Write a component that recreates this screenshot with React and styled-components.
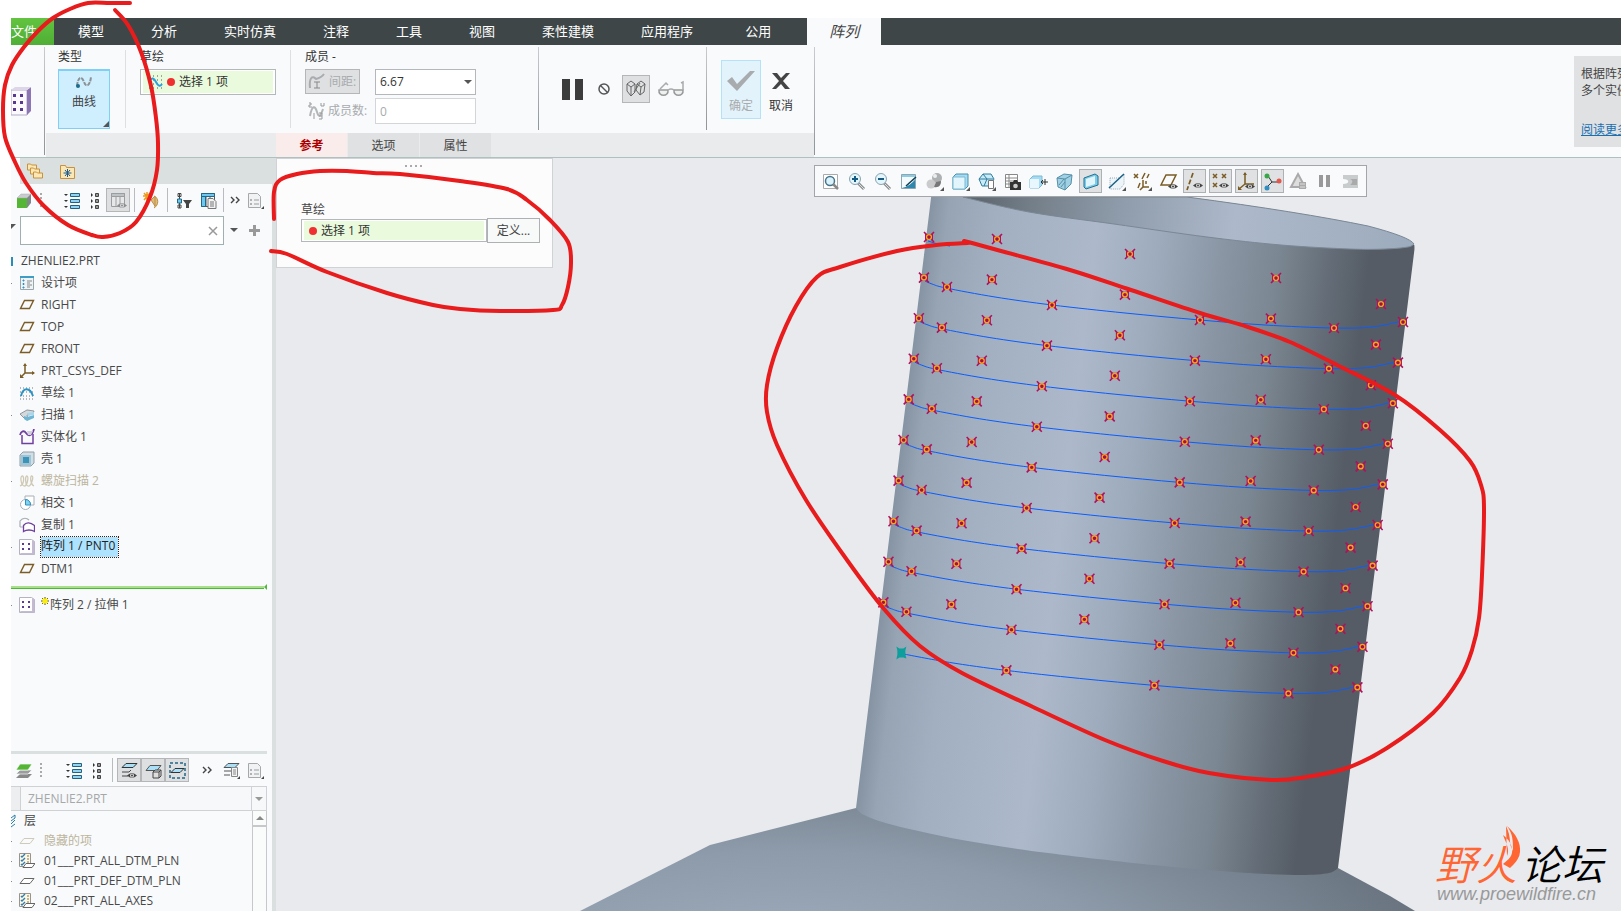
import React from "react";
import styled, { createGlobalStyle, css } from "styled-components";

const GlobalStyle = createGlobalStyle`
  *, *::before, *::after { box-sizing: border-box; }
  body {
    margin: 0;
    background: #fff;
    color: #444;
    font-family: "Open Sans", "Noto Sans CJK SC", sans-serif;
    font-size: 12px;
    line-height: 16px;
  }
  button, input, select { font: inherit; color: inherit; margin: 0; padding: 0; border-radius: 0; }
  ul { list-style: none; margin: 0; padding: 0; }
  svg { flex: none; }
`;

/* ---------- page frame ---------- */
const Page = styled.div`
  position: relative;
  display: flex;
  flex-direction: column;
  height: 100vh;
  padding: 18px 0 0 11px;
  overflow: hidden;
`;
const MenuBar = styled.nav`
  display: flex;
  flex: none;
  gap: 1px;
  height: 27px;
  background: #3e4647;
`;
const MenuTab = styled.button`
  border: 0;
  padding: 0 ${(p) => p.$pad || 23}px 2px;
  background: transparent;
  color: #fff;
  font-size: 13px;
  white-space: nowrap;
  ${(p) =>
    p.$kind === "file" &&
    css`
      width: 43px;
      padding: 0 0 2px;
      text-align: left;
      background: linear-gradient(#62c440, #4fae35);
    `}
  ${(p) =>
    p.$kind === "active" &&
    css`
      width: 74px;
      margin-left: 7px;
      padding: 0 0 2px;
      background: #f8fafc;
      color: #444;
      font-size: 15px;
      font-style: italic;
    `}
`;

/* ---------- ribbon ---------- */
const Ribbon = styled.header`
  display: flex;
  flex: none;
  height: 113px;
  background: #f8fafc;
  border-bottom: 1px solid #b0bfbf;
`;
const Divider = styled.span`
  flex: none;
  width: 1px;
  margin: 2px 0 ${(p) => (p.$short ? 3 : 2)}px;
  background: linear-gradient(#c9cccf, #8f9496);
`;
const Stub = styled.div`
  display: flex;
  flex: none;
  width: 33px;
  padding-top: 41px;
`;
const RibbonMain = styled.div`
  display: flex;
  flex-direction: column;
  flex: none;
  padding-left: 1px;
`;
const Groups = styled.div`
  display: flex;
  height: 88px;
`;
const Group = styled.section`
  padding: 4px ${(p) => p.$right || 14}px 4px ${(p) => p.$left || 14}px;
`;
const LightRule = styled.span`
  width: 1px;
  margin: 5px 0;
  background: #dde0e2;
`;
const GroupTitle = styled.label`
  display: block;
  height: 20px;
  line-height: 15px;
  color: #333;
`;
const CurveButton = styled.button`
  display: flex;
  flex-direction: column;
  align-items: center;
  gap: 5px;
  position: relative;
  width: 52px;
  height: 60px;
  padding-top: 4px;
  border: 1px solid #7fd0f7;
  border-top-width: 2px;
  background: #cfefff;
  &::after {
    content: "";
    position: absolute;
    right: 0;
    bottom: 1px;
    border-left: 6px solid transparent;
    border-bottom: 6px solid #555;
  }
`;
const Collector = styled.div`
  display: flex;
  align-items: center;
  width: ${(p) => p.$width}px;
  height: ${(p) => p.$height}px;
  padding: 1px 2px;
  border: 1px solid #b4b8ba;
  background: #fff;
`;
const CollectorFill = styled.div`
  display: flex;
  align-items: center;
  gap: 4px;
  flex: 1;
  min-width: 0;
  height: 100%;
  padding-left: 5px;
  background: #e9fbdc;
`;
const CollectorInput = styled.input`
  flex: 1;
  min-width: 0;
  border: 0;
  background: transparent;
  color: #333;
`;
const RedDot = styled.span`
  flex: none;
  width: 8px;
  height: 8px;
  border-radius: 50%;
  background: #f03030;
`;
const FieldRow = styled.div`
  display: flex;
  gap: 15px;
  margin-bottom: 3px;
`;
const SpacingToggle = styled.button`
  display: flex;
  align-items: center;
  gap: 3px;
  width: 55px;
  height: 25px;
  padding-left: 2px;
  border: 1px solid #b4b6b8;
  background: #dfe0e2;
  color: #a8abad;
  white-space: nowrap;
`;
const CountLabel = styled.label`
  display: flex;
  align-items: center;
  gap: 3px;
  width: 55px;
  padding-left: 3px;
  color: #a8abad;
  white-space: nowrap;
`;
const boxField = css`
  width: 101px;
  height: 26px;
  padding-left: 4px;
  border: 1px solid #b4b8ba;
  background: #fff;
  color: #333;
`;
const SelectShell = styled.div`
  position: relative;
  display: flex;
  &::after {
    content: "";
    position: absolute;
    right: 4px;
    top: 11px;
    border: 4px solid transparent;
    border-top-color: #555;
    pointer-events: none;
  }
`;
const ValueSelect = styled.select`
  ${boxField}
  appearance: none;
`;
const CountInput = styled.input`
  ${boxField}
  border-color: #d3d6d8;
  &:disabled { color: #a8abad; background: #fff; }
`;
const Controls = styled.section`
  display: flex;
  align-items: center;
  gap: ${(p) => p.$gap}px;
  padding: 0 ${(p) => p.$right}px 0 ${(p) => p.$left}px;
`;
const PlainButton = styled.button`
  display: flex;
  align-items: center;
  justify-content: center;
  width: ${(p) => p.$size || 28}px;
  height: 28px;
  border: 1px solid ${(p) => (p.$on ? "#b4b6b8" : "transparent")};
  background: ${(p) => (p.$on ? "#dfe0e2" : "transparent")};
`;
const VerdictButton = styled.button`
  display: flex;
  flex-direction: column;
  align-items: center;
  gap: 3px;
  width: ${(p) => (p.$ok ? 40 : 30)}px;
  height: 59px;
  padding-top: 6px;
  border: 1px solid ${(p) => (p.$ok ? "#b5e2f7" : "transparent")};
  background: ${(p) => (p.$ok ? "#e3f3fb" : "transparent")};
  color: ${(p) => (p.$ok ? "#a8abad" : "#333")};
  white-space: nowrap;
`;
const SubBar = styled.div`
  display: flex;
  gap: 1px;
  flex: 1;
  padding-left: 230px;
  background: #e9ebec;
`;
const SubTab = styled.button`
  width: 71px;
  padding-top: 2px;
  border: 0;
  background: ${(p) => (p.$active ? "#fbecec" : "#dfe1e2")};
  color: ${(p) => (p.$active ? "#a00" : "#444")};
  font-weight: ${(p) => (p.$active ? 600 : 400)};
`;
const HelpCard = styled.aside`
  width: 47px;
  height: 91px;
  margin: 11px 0 0 auto;
  padding: 9px 0 0 7px;
  overflow: hidden;
  background: #dfe1e3;
  line-height: 17px;
  white-space: nowrap;
`;
const HelpLink = styled.a`
  display: block;
  margin-top: 22px;
  color: #1a6fb0;
`;

/* ---------- body ---------- */
const Body = styled.div`
  display: flex;
  flex: 1;
  min-height: 0;
`;
const Side = styled.aside`
  display: flex;
  flex-direction: column;
  flex: none;
  width: 265px;
  border-right: 4px solid #dadfdf;
  background: #f8fafc;
`;
const SideTabs = styled.div`
  display: flex;
  align-items: center;
  gap: 16px;
  height: 26px;
  margin: 0 -4px 0 9px;
  padding-left: 7px;
  background: #dadfdf;
`;
const BareButton = styled.button`
  display: flex;
  align-items: center;
  justify-content: center;
  border: 0;
  background: transparent;
`;
const SideTools = styled.div`
  display: flex;
  align-items: center;
  height: ${(p) => p.$height}px;
`;
const Tool = styled.button`
  display: flex;
  align-items: center;
  justify-content: center;
  flex: none;
  width: ${(p) => p.$width || 24}px;
  height: 24px;
  border: 1px solid ${(p) => (p.$on ? "#b4b6b8" : "transparent")};
  background: ${(p) => (p.$on ? "#dddfe1" : "transparent")};
`;
const ToolRule = styled.span`
  width: 1px;
  height: 24px;
  margin: 0 ${(p) => p.$gap || 4}px;
  background: #b8bcbe;
`;
const Spacer = styled.span`
  flex: 1;
`;
const Grip = styled.span`
  width: 2px;
  height: 14px;
  margin: 0 ${(p) => p.$after}px 0 5px;
  background: repeating-linear-gradient(#aaa 0 2px, transparent 2px 4px);
`;
const SearchRow = styled.div`
  display: flex;
  align-items: flex-start;
  height: 34px;
`;
const SearchBox = styled.div`
  display: flex;
  width: 204px;
  height: 29px;
  border: 1px solid #a0b0b2;
  background: #fff;
`;
const SearchInput = styled.input`
  flex: 1;
  min-width: 0;
  padding-left: 6px;
  border: 0;
  background: transparent;
`;
const FilterMark = styled.svg`
  width: 9px;
  height: 29px;
`;
const SearchTool = styled(BareButton)`
  width: 20px;
  height: 28px;
`;
const Tree = styled.ul`
  flex: 1;
  overflow: hidden;
`;
const TreeRow = styled.li`
  display: flex;
  align-items: center;
  gap: ${(p) => (p.$layer ? 9 : 6)}px;
  height: ${(p) => (p.$layer ? 20 : 22)}px;
  color: ${(p) => (p.$muted ? "#bdb59c" : "#484848")};
  white-space: nowrap;
`;
const Tick = styled.span`
  width: 8px;
  margin-right: -${(p) => (p.$layer ? 9 : 6)}px;
  &::before {
    content: "";
    display: block;
    width: 1px;
    height: 1px;
    background: ${(p) => (p.$show ? "#888" : "transparent")};
  }
`;
const RootRow = styled.li`
  display: flex;
  align-items: center;
  gap: 8px;
  height: ${(p) => (p.$layer ? 20 : 22)}px;
  white-space: nowrap;
`;
const RootBar = styled.span`
  width: 2px;
  height: 9px;
  background: #2b8cb5;
`;
const NodeName = styled.span`
  ${(p) =>
    p.$selected &&
    css`
      height: 20px;
      padding: 1px 3px 0 0;
      outline: 1px dotted #402010;
      background: #aee3ff;
      color: #222;
    `}
`;
const InsertMarker = styled.li`
  display: flex;
  align-items: center;
  height: 14px;
  margin-right: 5px;
  &::before {
    content: "";
    flex: 1;
    height: 3px;
    border-top: 2px solid #a8e08a;
    border-bottom: 1px solid #4fb83a;
  }
  &::after {
    content: "";
    border: 3px solid transparent;
    border-left: 0;
    border-right-color: #4fb83a;
  }
`;
const LayerPanel = styled.div`
  flex: none;
  height: 160px;
  margin-right: 5px;
  overflow: hidden;
  border-top: 3px solid #dadfdf;
`;
const ModelSelectShell = styled.div`
  display: flex;
  position: relative;
  padding-left: 9px;
  height: 25px;
  border: solid #cfd2d4;
  border-width: 1px 0;
  background: #eceeef;
  &::after {
    content: "";
    position: absolute;
    right: 4px;
    top: 10px;
    border: 4px solid transparent;
    border-top-color: #999;
    pointer-events: none;
  }
`;
const ModelSelect = styled.select`
  flex: 1;
  padding-left: 7px;
  border: solid #cfd2d4;
  border-width: 0 1px;
  appearance: none;
  &:disabled {
    opacity: 1;
    color: #a5a8aa;
    background: linear-gradient(#cfd2d4, #cfd2d4) right 14px top / 1px 100% no-repeat #f7f8f9;
  }
`;
const LayerBody = styled.div`
  display: flex;
`;
const LayerList = styled.ul`
  flex: 1;
`;
const Scrollbar = styled.div`
  width: 15px;
  height: 100px;
  border: solid #c6c9cb;
  border-width: 0 1px;
  background: #fafbfb;
`;
const ScrollUp = styled(BareButton)`
  width: 13px;
  height: 16px;
  border-bottom: 2px solid #c6c9cb;
`;

/* ---------- viewport ---------- */
const Viewport = styled.main`
  position: relative;
  flex: 1;
  min-width: 0;
  background: #e8eaee;
  overflow: hidden;
`;
const Scene = styled.svg`
  display: block;
  width: 100%;
  height: 100%;
`;
const RefPanel = styled.section`
  position: absolute;
  top: 0;
  left: 0;
  width: 277px;
  height: 110px;
  padding: 6px 12px 0 24px;
  border: 1px solid #d0d3d5;
  background: #fcfcfc;
`;
const PanelGrip = styled.div`
  width: 18px;
  height: 2px;
  margin: 0 auto 32px 104px;
  background: repeating-linear-gradient(90deg, #aaa 0 2px, transparent 2px 5px);
`;
const PanelLabel = styled.label`
  display: block;
  height: 19px;
  padding-top: 3px;
`;
const PanelRow = styled.div`
  display: flex;
  align-items: center;
`;
const DefineButton = styled.button`
  width: 53px;
  height: 25px;
  border: 1px solid #aeb1b3;
  background: #f8f9f9;
`;
const ViewBar = styled.div`
  position: absolute;
  top: 7px;
  left: 40%;
  display: flex;
  gap: 3px;
  padding: 3px 4px 3px 4px;
  border: 1px solid #a2a6a8;
  background: #f8fafc;
`;
const ViewTool = styled.button`
  display: flex;
  align-items: center;
  justify-content: center;
  width: 23px;
  height: 24px;
  border: 1px solid ${(p) => (p.$on ? "#aeb1b3" : "transparent")};
  background: ${(p) => (p.$on ? "#dfe1e3" : "transparent")};
`;
const Watermark = styled.div`
  position: absolute;
  right: 18px;
  bottom: 7px;
  width: 168px;
`;
const Brand = styled.div`
  display: flex;
  justify-content: space-between;
  height: 45px;
  font: italic 350 41px/44px "Noto Sans CJK SC", sans-serif;
  color: #000;
`;
const BrandHot = styled.span`
  color: #ff6633;
`;
const Flame = styled.svg`
  position: absolute;
  left: 64px;
  top: -14px;
  width: 24px;
  height: 44px;
`;
const Site = styled.div`
  padding-left: 2px;
  font: italic 18px/19px "Liberation Sans", sans-serif;
  color: #999;
`;
const Annotations = styled.svg`
  position: absolute;
  inset: 0;
  width: 100%;
  height: 100%;
  pointer-events: none;
`;

/* ---------- icons ---------- */
const Svg = ({ w = 16, h = 16, box, children }) => (
  <svg width={w} height={h} viewBox={box || `0 0 ${w} ${h}`} fill="none" aria-hidden="true">
    {children}
  </svg>
);
const Corner = () => <path d="M20 16v4h-4z" fill="#555" />;
const Eye = ({ x = 9, y = 11, c = "#444" }) => (
  <g transform={`translate(${x} ${y})`}>
    <path d="M0 3.500Q5-1.500 10 3.500Q5 8 0 3.500z" fill={c} />
    <circle cx="5" cy="3.500" r="2" fill="#ddd" />
    <circle cx="5" cy="3.500" r="1" fill={c} />
  </g>
);

const plane = <path d="M5.500 3.500h9l-4 8h-9z" stroke="#7a5c24" strokeWidth="1.400" />;
const patternIcon = (
  <>
    <path d="M.5.5h12l3 2v13H.5z" fill="#fff" stroke="#b5b3c0" />
    <path d="M13 1l2.500 1.500v13H2L1 14h12z" fill="#c4bbd3" />
    <path d="M3 4h2v2H3zM9 4h2v2H9zM3 9h2v2H3zM9 9h2v2H9z" fill="#5b3b92" />
  </>
);
const treeIcons = {
  design: (
    <>
      <path d="M1.500 1.500h13v13h-13z" fill="#eef3f5" stroke="#9ba6ac" />
      <path d="M1 1h14v2H1z" fill="#3f9cc4" />
      <path d="M4 5h1v1H4zM4 8.500h1v1H4zM4 12h1v1H4z" stroke="#2b8cc4" />
      <path d="M8 6h5M8 8h3M8 10h5M8 12h3" stroke="#888" />
    </>
  ),
  plane,
  csys: (
    <>
      <path d="M6 2v8h9M6 10l-4 4" stroke="#7a5c24" strokeWidth="1.500" />
      <path d="M4 3l2-3 2 3zM13 8l3 2-3 2zM1 11v4h4z" fill="#7a5c24" />
    </>
  ),
  sketch: (
    <>
      <path d="M1 3h14M1 7h14M1 11h14M1 14h14" stroke="#777" strokeDasharray="1 2" />
      <path d="M2 11C4 2 11 2 14 11" stroke="#2a92c4" strokeWidth="2" />
    </>
  ),
  sweep: (
    <>
      <path d="M1 7l7-4 7 1-1 3-6 1 1 5-4-2z" fill="#d5d9dc" stroke="#8e979d" />
      <path d="M5 9l3 1 7-2v3l-7 3-3-2z" fill="#6fb5d3" />
      <path d="M8 6l7-1v3l-6 1z" fill="#a9d6ea" />
    </>
  ),
  solidify: (
    <>
      <path d="M3 6v8.500h11V5" stroke="#7040a0" strokeWidth="1.500" />
      <path d="M1 6C2 2 5 1 7 4s6 4 8-4" stroke="#7040a0" strokeWidth="1.800" />
      <path d="M8 2h6l-2 4H9z" fill="#d3d0dc" />
    </>
  ),
  shell: (
    <>
      <path d="M1 4l3-3h11v11l-3 3H1z" fill="#d3dde3" stroke="#8fa0ab" />
      <path d="M3 5h8v8H3z" fill="#3b93b8" stroke="#9cc6d8" strokeWidth="2" />
    </>
  ),
  helix: <path d="M1 13C6 11 5 2 3 3s-1 9 2 10 5-9 3-10-2 9 1 10 6-9 4-10-2 8 2 10" stroke="#cfc8b4" strokeWidth="1.300" />,
  intersect: (
    <>
      <path d="M6 1h9v9H6z" fill="#fff" stroke="#aab0b4" />
      <circle cx="6.500" cy="9.500" r="5" stroke="#aab0b4" fill="#fff" />
      <path d="M6.500 4.500a5 5 0 0 1 5 5.500h-5z" fill="#7fd2f2" stroke="#2a92c4" />
    </>
  ),
  copy: (
    <>
      <path d="M1 10V4c3-4 7-3 9-1M1 10h3" stroke="#a9adb1" strokeWidth="1.200" />
      <path d="M4.500 14.500v-6c3-4 7-3 11 0v6c-3-2-8-2-11 0z" stroke="#7040a0" strokeWidth="1.300" fill="#fff" />
    </>
  ),
  pattern: patternIcon,
  layerOff: <path d="M5 5.500h10l-4 5H1z" stroke="#d0caba" />,
  layer: <path d="M5 5.500h10l-4 5H1z" stroke="#666" fill="#fff" />,
  layerRule: (
    <>
      <path d="M.5.5h11v13H.5z" fill="#fff8dc" stroke="#9b948a" />
      <path d="M2 3l1 1 3-3M2 7l1 1 3-3M2 11l1 1 3-3" stroke="#2a7fc4" strokeWidth="1.400" />
      <path d="M8 3h2M8 6h2M8 9h2" stroke="#777" />
      <path d="M7 10.500h9l-3 4H4z" stroke="#666" fill="#fff" />
    </>
  ),
};

const sideIcons = {
  cube: (
    <>
      <path d="M2 6h10v10H2z" fill="#55b535" />
      <path d="M2 6l4-4h10l-4 4z" fill="#c9ccce" stroke="#aaa" strokeWidth=".5" />
      <path d="M12 6l4-4v9l-4 5z" fill="#80868a" />
    </>
  ),
  layers: (
    <>
      <path d="M1 16l4-4h12l-4 4z" fill="#888" />
      <path d="M1 12l4-4h12l-4 4z" fill="#9c9c9c" stroke="#f8fafc" strokeWidth=".7" />
      <path d="M1 8l4-6h12l-4 6z" fill="#55b535" stroke="#f8fafc" strokeWidth=".7" />
    </>
  ),
  expand: (
    <>
      <path d="M6.500 1.500h9v3h-9zM6.500 7.500h9v3h-9zM6.500 13.500h9v3h-9z" fill="#8ed4f3" stroke="#25607c" />
      <path d="M0 2h4L2 4zM0 8h4l-2 2zM0 14h4l-2 2z" fill="#333" />
    </>
  ),
  collapse: (
    <>
      <path d="M5.500 1.500h3v3h-3zM5.500 7.500h3v3h-3zM5.500 13.500h3v3h-3z" fill="#999" stroke="#444" />
      <path d="M1 1l2 2-2 2zM1 7l2 2-2 2zM1 13l2 2-2 2z" fill="#333" />
    </>
  ),
  columns: (
    <>
      <path d="M1.500 1.500h13v13h-13zM6 2v13M10 2v13" stroke="#9a9da0" fill="#e6e7e8" />
      <path d="M1.500 1.500h13v3h-13z" fill="#bfc2c4" stroke="#9a9da0" />
      <Eye x={7} y={10} c="#8b8e90" />
    </>
  ),
  find: (
    <>
      <path d="M8 8l4-4v10z M11 4c5 2 5 9 0 12" fill="#e0bd78" stroke="#b98f48" />
      <path d="M4 0v9M0 4h9M1 1l6 7M7 1L1 8" stroke="#eb9a1c" strokeWidth="1.500" />
    </>
  ),
  filter: (
    <>
      <path d="M3.500 1v15M2 1.500h3v3H2zM2 13h3v3H2z" stroke="#444" fill="#fff" />
      <path d="M1.500 7h4v4h-4z" fill="#6cc8ee" stroke="#246685" />
      <path d="M7 8h9l-3 4v4h-3v-4z" fill="#444" />
    </>
  ),
  treeCols: (
    <>
      <path d="M1.500 1.500h13v13h-13zM6 1v13M10 1v13" stroke="#555" fill="#fff" />
      <path d="M1.500 1.500h13v3h-13zM1.500 4.500h4v10h-4z" fill="#6cc8ee" stroke="#246685" />
      <path d="M8 6.500h5l3 3v7H8z" fill="#f3f3f3" stroke="#777" />
      <path d="M10 10h4M10 12h4M10 14h4" stroke="#777" />
    </>
  ),
  sheet: (
    <>
      <path d="M1.500 1.500h9l3 3v11h-12z" fill="#f0f2f3" stroke="#a5a9ab" />
      <path d="M3.500 7.500h1v1h-1zM3.500 11.500h1v1h-1zM7 8h5M7 12h5" stroke="#9a9da0" />
      <path d="M17 14v3h-3z" fill="#444" />
    </>
  ),
  more: <path d="M1 5l3 3-3 3M6 5l3 3-3 3" stroke="#444" strokeWidth="1.400" />,
  layerEye: (
    <>
      <path d="M5 1.500h11l-4 4H1z" fill="#a9e0f7" stroke="#333" />
      <path d="M1 10h7l2-2M1 14h6" stroke="#444" />
      <Eye x={6} y={10} />
    </>
  ),
  layerBox: (
    <>
      <path d="M5 3.500h11l-4 5H1z" fill="#a9e0f7" stroke="#555" />
      <path d="M8 10l2-2h6v6l-2 2H8zM8 10h6v6M14 10l2-2" fill="#ddd" stroke="#444" />
    </>
  ),
  layerDash: (
    <>
      <path d="M1 1h15v15H1z" stroke="#246685" strokeWidth="1.500" strokeDasharray="3 2" />
      <path d="M6 6.500h9l-4 4H2z" fill="#a9e0f7" stroke="#333" />
    </>
  ),
  layerSheet: (
    <>
      <path d="M5 1.500h11l-4 4H1z" fill="#a9e0f7" stroke="#555" />
      <path d="M1 9h7M1 13h6" stroke="#555" />
      <path d="M8.500 5.500h6v9h-6z" fill="#f3f3f3" stroke="#888" />
      <path d="M10 8h3M10 10h3M10 12h3" stroke="#888" />
      <path d="M17 14v3h-3z" fill="#444" />
    </>
  ),
  folders: (
    <>
      {[0, 4, 8].map((d) => (
        <path key={d} d={`M${d * 0.75 + 0.5} ${1 + d}h3l1 1h5v5h-9z`} fill="#fbe7b5" stroke="#c8913a" />
      ))}
    </>
  ),
  favourite: (
    <>
      <path d="M.5 2.500h5l1 2h8v11H.5z" fill="#fbe7b5" stroke="#c8913a" />
      <path d="M7.500 6v8M3.500 10h8M5 7l5 6M10 7l-5 6" stroke="#1c5b8c" />
    </>
  ),
};

const blueBox = (
  <>
    <path d="M3 6l3-3h12v12l-3 3H3z" fill="#a6dcf3" stroke="#478fae" />
    <path d="M3 6h12v12H3z" fill="#e3f5fc" stroke="#7cb9d2" />
  </>
);
const lens = (mark) => (
  <>
    <path d="M12 12l6 6" stroke="#8b8f92" strokeWidth="3" />
    <path d="M13 13l5 5" stroke="#ddd" />
    <circle cx="9" cy="8" r="5.500" fill="#e3f6fd" stroke="#8ba4b0" />
    <path d={mark} stroke="#175a82" strokeWidth="2" />
  </>
);
const viewTools = [
  ["重新调整", false, <><path d="M3.500 3.500h14v14h-14z" fill="#fff" stroke="#aaa" /><circle cx="10" cy="10" r="4.500" fill="#d9f2fc" stroke="#47748a" strokeWidth="1.500" /><path d="M13 13l5 5" stroke="#888" strokeWidth="2.500" /></>],
  ["放大", false, lens("M9 5v6M6 8h6")],
  ["缩小", false, lens("M6 8h6")],
  ["重画", false, <><path d="M3.500 3.500h14v14h-14z" fill="#8ccde3" stroke="#8fa6b0" /><path d="M4 6h13C16 12 10 16 4 17z" fill="#f5fafc" /><path d="M4 17C10 16 14 12 17 9v8z" fill="#2e87ad" /><path d="M18 6L8 15" stroke="#123c50" strokeWidth="1.500" /></>],
  ["渲染", false, <><circle cx="13" cy="7" r="5" fill="#aeb1b3" /><circle cx="7" cy="13" r="4.500" fill="#c9cbcd" /><path d="M10 16c5 1 7-2 7-6l-5 1z" fill="#777" /><circle cx="11" cy="5" r="2" fill="#eee" /><Corner /></>],
  ["显示样式", false, <>{blueBox}<Corner /></>],
  ["已保存方向", false, <><path d="M3 8l4-5h8l3 5-4 7H6z" fill="#c9ebf8" stroke="#2e7c9c" /><path d="M3 8h14M7 3l4 5-3 7" stroke="#2e7c9c" /><path d="M12.500 9.500h5v8h-5z" fill="#fff" stroke="#777" /><Corner /></>],
  ["视图管理器", false, <><path d="M3.500 3.500h12v13h-12zM3 7h12M3 10h12M3 13h12M7 3v13" stroke="#888" fill="#fff" /><path d="M8 11h3l1-2h3l1 2h3v8H8z" fill="#333" /><circle cx="13.500" cy="15" r="2.300" fill="#ccc" /></>],
  ["透视图", false, <><path d="M2 8l3-3h9v9l-3 3H2z" fill="#a6dcf3" stroke="#7cb9d2" /><path d="M2 8h9v9H2z" fill="#e8f7fd" /><path d="M13 11h7M17 8v6M13 11l2-2M13 11l2 2" stroke="#333" /></>],
  ["截面", false, <><path d="M3 7l7-4 8 1-1 9-6 6-7-3z" fill="#9fd0e4" stroke="#5790a8" /><path d="M3 7l8 1 7-4M11 8v11M5 14l5-6M7 16l4-5" stroke="#5790a8" /></>],
  ["平面显示", true, <><path d="M4 7l11-4 3 2v9l-12 4-2-2z" fill="#7ccbe9" stroke="#25718f" /><path d="M6 8l9-3v8l-9 3z" fill="#e1f5fd" /></>],
  ["剖切", false, <><path d="M4 7h9l5-4v10l-4 5H4z" stroke="#9ab" strokeDasharray="1 1" fill="#eef5f8" /><path d="M3 17L18 3" stroke="#186287" strokeWidth="1.500" /><Corner /></>],
  ["基准显示过滤器", false, <><path d="M2 3l4 4M6 3L2 7M8 12L6 17M13 2l-3 6M17 3l-2 4" stroke="#7a5c24" strokeWidth="1.500" /><path d="M11 9v7h6M11 16l-3 3M14 10v3" stroke="#7a5c24" strokeWidth="1.500" /><Corner /></>],
  ["平面", false, <><path d="M8 4h10l-5 10H3z" stroke="#7a5c24" strokeWidth="1.500" /><Eye x={10} y={12} /></>],
  ["轴显示", true, <><path d="M9 2L3 19" stroke="#7a5c24" strokeWidth="1.700" strokeDasharray="5 2" /><Eye x={9} y={11} /></>],
  ["点显示", true, <><path d="M3 3l4 4M7 3L3 7M12 3l4 4M16 3l-4 4M3 12l4 4M7 12l-4 4" stroke="#7a5c24" strokeWidth="1.500" /><Eye x={9} y={11} /></>],
  ["坐标系显示", true, <><path d="M9 2v11M9 13l-6 5M9 13h9" stroke="#7a5c24" strokeWidth="1.500" /><path d="M7 4l2-3 2 3zM2 15v4h4z" fill="#7a5c24" /><Eye x={9} y={12} /></>],
  ["旋转中心", true, <><path d="M6 5l4 6-5 5M10 11h7" stroke="#333" /><circle cx="5" cy="5" r="2.500" fill="#3aa64a" /><circle cx="17" cy="10" r="2.500" fill="#e2584c" /><circle cx="5" cy="17" r="2.500" fill="#2f8fc0" /></>],
  ["注释显示", false, <><path d="M10 3l7 13H3z" stroke="#aaa" strokeWidth="2" fill="#ddd" /><path d="M11 11h7v7h-7z" fill="#aaa" /><path d="M12 13h5M12 16h5" stroke="#ddd" /></>],
  ["暂停", false, <path d="M5 4h4v12H5zM12 4h4v12h-4z" fill="#999" />],
  ["模拟", false, <><path d="M3 4h15v13H3v-4c7 0 7-5 0-5z" fill="#c9cccd" /><path d="M10 8c3 1 3 4 0 6h7V8z" fill="#aaa" /></>],
];

/* ---------- data ---------- */
const treeRows = [
  ["design", "设计项", { tick: true }],
  ["plane", "RIGHT"],
  ["plane", "TOP"],
  ["plane", "FRONT"],
  ["csys", "PRT_CSYS_DEF"],
  ["sketch", "草绘 1"],
  ["sweep", "扫描 1", { tick: true }],
  ["solidify", "实体化 1"],
  ["shell", "壳 1"],
  ["helix", "螺旋扫描 2", { tick: true, muted: true }],
  ["intersect", "相交 1"],
  ["copy", "复制 1"],
  ["pattern", "阵列 1 / PNT0", { tick: true, selected: true }],
  ["plane", "DTM1"],
];
const layerRows = [
  ["layerOff", "隐藏的项", { muted: true }],
  ["layerRule", "01___PRT_ALL_DTM_PLN"],
  ["layer", "01___PRT_DEF_DTM_PLN"],
  ["layerRule", "02___PRT_ALL_AXES"],
];

/* Pattern members: one turn of the helix, repeated along the cylinder axis. */
const PITCH = { x: -5.07, y: 40.6 };
const TURNS = Array.from({ length: 10 }, (_, i) => i);
const MEMBERS = [
  [929, 237], [997, 239], [1130, 254], [1276, 278], [1381, 304],
  [1403, 322], [947, 287], [1052, 305], [1200, 320], [1334, 328],
];

/* Catmull-Rom spline through the given points. */
const smooth = (pts) => {
  let d = `M${pts[0][0]} ${pts[0][1]}`;
  for (let i = 0; i < pts.length - 1; i++) {
    const p0 = pts[i - 1] || pts[i];
    const p1 = pts[i];
    const p2 = pts[i + 1];
    const p3 = pts[i + 2] || p2;
    d += `C${p1[0] + (p2[0] - p0[0]) / 6} ${p1[1] + (p2[1] - p0[1]) / 6} ${p2[0] - (p3[0] - p1[0]) / 6} ${p2[1] - (p3[1] - p1[1]) / 6} ${p2[0]} ${p2[1]}`;
  }
  return d;
};
const HELIX = smooth([[925, 281], [932, 284], [946, 288], [995, 297], [1052, 305], [1125, 313], [1200, 320], [1265, 325], [1333, 328], [1372, 327], [1402, 321]]);
const LAST_TURN = smooth([[946, 288], [995, 297], [1052, 305], [1125, 313], [1200, 320], [1265, 325], [1333, 328], [1372, 327], [1402, 321]]);
const RIM_FRONT = smooth([[963, 197], [1029, 212], [1114, 224], [1207, 237], [1281, 245], [1350, 249], [1385, 249], [1408, 247], [1414, 244]]);
const FOOT = smooth([[856, 808], [864, 815], [893, 825], [962, 840], [1048, 853], [1163, 866], [1249, 873], [1301, 875], [1329, 873], [1338, 868]]);

const STROKES = [
  [[130, 3], [110, 3], [88, 3], [70, 9], [53, 18], [38, 31], [24, 47], [12, 65], [5, 85], [3, 110], [5, 137], [15, 162], [26, 183], [44, 206], [68, 225], [92, 235], [103, 237], [120, 233], [136, 222], [150, 197], [157, 170], [158, 143], [156, 118], [151, 86], [141, 52], [128, 25], [115, 10]],
  [[274, 219], [274, 192], [280, 180], [297, 174], [320, 171], [347, 171], [373, 173], [400, 174], [460, 181], [507, 189], [527, 200], [550, 220], [568, 242], [571, 263], [568, 287], [562, 305], [553, 310], [500, 311], [460, 309], [433, 305], [387, 293], [327, 272], [287, 254], [271, 251]],
  [[964, 241], [972, 243], [1001, 251], [1070, 270], [1131, 290], [1200, 313], [1248, 327], [1290, 342], [1337, 365], [1395, 395], [1440, 430], [1470, 461], [1481, 485], [1484, 508], [1482, 575], [1479, 618], [1472, 650], [1460, 678], [1433, 713], [1387, 748], [1347, 768], [1306, 777], [1272, 780], [1209, 773], [1163, 761], [1105, 740], [1031, 706], [962, 673], [920, 646], [884, 609], [847, 560], [806, 500], [777, 445], [767, 412], [767, 385], [777, 348], [796, 306], [817, 277], [840, 267], [897, 251], [936, 245], [968, 243]],
];

const Marker = ({ x, y, seed }) => (
  <g transform={`translate(${x} ${y})`}>
    {seed ? (
      <path d="M-5-6l3 2h4l3-2-1 4v4l1 4-3-1h-4l-3 2 1-5v-4z" fill="#0c9f9b" />
    ) : (
      <>
        <path d="M-5-5L5 5M5-5L-5 5" stroke="#b0105c" strokeWidth="1.600" />
        <path d="M-4-3h8v6h-8z" fill="#b0105c" />
        <circle r="2.400" fill="#a01050" stroke="#f5a51c" strokeWidth="1.400" />
      </>
    )}
  </g>
);

function Model() {
  return (
    <Scene viewBox="276 158 1345 753" preserveAspectRatio="xMinYMin slice" role="img" aria-label="ZHENLIE2">
      <defs>
        <linearGradient id="wall" gradientUnits="userSpaceOnUse" x1="894" y1="500" x2="1372" y2="558">
          <stop offset="0" stopColor="#8593a2" />
          <stop offset=".04" stopColor="#96a4b4" />
          <stop offset=".14" stopColor="#a1afc0" />
          <stop offset=".35" stopColor="#adb9ca" />
          <stop offset=".48" stopColor="#9dabbc" />
          <stop offset=".62" stopColor="#8995a3" />
          <stop offset=".73" stopColor="#7b8792" />
          <stop offset=".84" stopColor="#646d77" />
          <stop offset=".92" stopColor="#555c66" />
          <stop offset="1" stopColor="#555c66" />
        </linearGradient>
        <linearGradient id="bore" gradientUnits="userSpaceOnUse" x1="963" y1="200" x2="1414" y2="250">
          <stop offset="0" stopColor="#59616a" />
          <stop offset=".15" stopColor="#737e88" />
          <stop offset=".35" stopColor="#8f9cab" />
          <stop offset=".6" stopColor="#adb9ca" />
          <stop offset="1" stopColor="#9cabbd" />
        </linearGradient>
        <radialGradient id="cone" gradientUnits="userSpaceOnUse" cx="790" cy="960" r="640" gradientTransform="matrix(1 0 0 .34 0 634)">
          <stop offset="0" stopColor="#a0adbf" />
          <stop offset=".5" stopColor="#8e9baa" />
          <stop offset="1" stopColor="#697480" />
        </radialGradient>
      </defs>
      <path d="M580 911L710 845L856 808L1338 868L1390 896L1415 911z" fill="url(#cone)" />
      <path d={`M932 190L856 808${FOOT.replace(/^M[^C]+/, "")}L1415 245L1186 190z`} fill="url(#wall)" />
      <path d="M1187 190L1440 190V250H1415L1414 243Q1410 237 1368 226Q1300 212 1187 197z" fill="#e8eaee" />
      <path d={`${RIM_FRONT}Q1410 237 1368 226Q1300 212 1187 197z`} fill="url(#bore)" stroke="#7b8794" />
      <path d="M928 241q10 4 22 5" stroke="#0a5cff" fill="none" />
      {TURNS.map((k) => (
        <path
          key={k}
          d={k === 9 ? LAST_TURN : HELIX}
          transform={`translate(${k * PITCH.x} ${k * PITCH.y})`}
          stroke="#0a5cff"
          fill="none"
        />
      ))}
      {TURNS.map((k) =>
        MEMBERS.map(([x, y], i) => (
          <Marker key={`${k}-${i}`} x={x + k * PITCH.x} y={y + k * PITCH.y} seed={k === 9 && i === 6} />
        ))
      )}
    </Scene>
  );
}

const SideTool = ({ name, label, on, size = 17, width }) => (
  <Tool type="button" aria-label={label} $on={on} $width={width}>
    <Svg w={size} h={17}>{sideIcons[name]}</Svg>
  </Tool>
);

function Header() {
  return (
    <Ribbon>
      <Stub>
        <Svg w={21} h={31}>
          <path d="M0 4h16v25H0z" fill="#fbfafd" stroke="#b3a9c4" />
          <path d="M16 4l4-3v24l-4 4z" fill="#8d76b4" />
          <path d="M0 4l4-3h16l-4 3z" fill="#ddd5ea" />
          <path d="M2 8h3v3H2zM9 8h3v3H9zM2 15h3v3H2zM9 15h3v3H9zM2 22h3v3H2zM9 22h3v3H9z" fill="#59398f" />
        </Svg>
      </Stub>
      <Divider />
      <RibbonMain>
        <Groups>
          <Group $left={12} $right={15}>
            <GroupTitle as="div">类型</GroupTitle>
            <CurveButton type="button">
              <Svg w={18} h={14}>
                <path d="M2 11C3 1 7 1 9 7s6 4 7-5" stroke="#8b9295" strokeWidth="2" strokeDasharray="4 1" />
                <circle cx="3" cy="11" r="2" fill="#1c6c8c" />
              </Svg>
              曲线
            </CurveButton>
          </Group>
          <LightRule />
          <Group>
            <GroupTitle htmlFor="sketch">草绘</GroupTitle>
            <Collector $width={136} $height={26}>
              <CollectorFill>
                <Svg w={15} h={15}>
                  <path d="M1 1h14M1 5h14M1 9h14M1 13h14" stroke="#555" strokeDasharray="1 3" />
                  <path d="M1 6c3-4 5-3 7 1s4 5 6 2" stroke="#2da0dc" strokeWidth="2" />
                </Svg>
                <RedDot />
                <CollectorInput id="sketch" readOnly value="选择 1 项" />
              </CollectorFill>
            </Collector>
          </Group>
          <LightRule />
          <Group $right={62}>
            <GroupTitle htmlFor="spacing">成员 -</GroupTitle>
            <FieldRow>
              <SpacingToggle type="button">
                <Svg w={18} h={18}>
                  <path d="M2 15C1 5 4 2 8 6c4-1 6-2 8-5" stroke="#a9acae" strokeWidth="2" />
                  <path d="M6 9h6M6 15h6M9 9v6" stroke="#888" />
                </Svg>
                间距:
              </SpacingToggle>
              <SelectShell>
                <ValueSelect id="spacing" defaultValue="6.67">
                  <option>6.67</option>
                </ValueSelect>
              </SelectShell>
            </FieldRow>
            <FieldRow>
              <CountLabel htmlFor="count">
                <Svg w={17} h={18}>
                  <path d="M2 14C4 3 7 3 9 10s4 3 6-3" stroke="#b3b6b8" strokeWidth="2" />
                  <path d="M1 1h2v2H1v2h3M13 1v3h3V1M6 11v6M11 11h3v6h-3M11 14h3" stroke="#999" />
                </Svg>
                成员数:
              </CountLabel>
              <CountInput id="count" disabled value="0" readOnly />
            </FieldRow>
          </Group>
          <Divider $short />
          <Controls $left={22} $right={14} $gap={0}>
            <BareButton type="button" aria-label="暂停">
              <Svg w={23} h={23}><path d="M1 1h8v21H1zM14 1h8v21h-8z" fill="#3c3c3c" /></Svg>
            </BareButton>
            <PlainButton type="button" aria-label="无预览" $size={38}>
              <Svg w={14} h={14}>
                <circle cx="8" cy="7" r="5" stroke="#555" strokeWidth="1.500" />
                <path d="M4 3l8 8" stroke="#555" strokeWidth="1.500" />
              </Svg>
            </PlainButton>
            <PlainButton type="button" aria-label="分离预览" $on>
              <Svg w={20} h={20}>
                <path d="M1 5l4-3 4 3v8l-4 4-4-5zM11 5l4-3 4 3-1 8-4 3-4-5zM1 5l4 3 4-3M5 8v9M11 5l4 3 4-3M15 8l-1 8M8 13l6-9" stroke="#666" />
              </Svg>
            </PlainButton>
            <PlainButton type="button" aria-label="预览" $size={42}>
              <Svg w={28} h={18}>
                <path d="M2 10h9c1 7-10 7-9 0zM17 10h9c1 7-10 7-9 0z" fill="#eef0f1" stroke="#999" strokeWidth="1.500" />
                <path d="M11 10q3-2 6 0M3 9l6-6 2 2M26 10V2l-2 1" stroke="#aaa" strokeWidth="1.500" />
              </Svg>
            </PlainButton>
          </Controls>
          <Divider $short />
          <Controls $left={14} $right={18} $gap={5}>
            <VerdictButton type="button" $ok>
              <Svg w={30} h={28}><path d="M1 14l5-4 5 7L24 4h5L11 24z" fill="#a9acae" /></Svg>
              确定
            </VerdictButton>
            <VerdictButton type="button">
              <Svg w={20} h={28}><path d="M1 6h5l4 5 5-5h4l-7 8 7 8h-5l-4-5-5 5H1l7-8z" fill="#444" /></Svg>
              取消
            </VerdictButton>
          </Controls>
        </Groups>
        <SubBar>
          <SubTab type="button" $active>参考</SubTab>
          <SubTab type="button">选项</SubTab>
          <SubTab type="button">属性</SubTab>
        </SubBar>
      </RibbonMain>
      <Divider />
      <HelpCard>
        <div>根据阵列</div>
        <div>多个实例</div>
        <HelpLink href="#more">阅读更多</HelpLink>
      </HelpCard>
    </Ribbon>
  );
}

function Sidebar() {
  return (
    <Side>
      <SideTabs>
        <BareButton type="button" aria-label="文件夹浏览器"><Svg w={17} h={17}>{sideIcons.folders}</Svg></BareButton>
        <BareButton type="button" aria-label="收藏夹"><Svg w={16} h={16}>{sideIcons.favourite}</Svg></BareButton>
      </SideTabs>
      <SideTools $height={32}>
        <SideTool name="cube" label="模型" />
        <Grip $after={18} />
        <SideTool name="expand" label="全部展开" />
        <SideTool name="collapse" label="全部折叠" size={10} width={22} />
        <SideTool name="columns" label="显示列" on />
        <ToolRule />
        <SideTool name="find" label="查找" />
        <ToolRule />
        <SideTool name="filter" label="树过滤器" />
        <SideTool name="treeCols" label="树列" />
        <ToolRule $gap={3} />
        <Tool type="button" aria-label="更多" $width={16}><Svg w={10} h={16}>{sideIcons.more}</Svg></Tool>
        <SideTool name="sheet" label="设置" />
      </SideTools>
      <SearchRow>
        <FilterMark viewBox="0 0 9 29"><path d="M0 8h5L0 13z" fill="#555" /></FilterMark>
        <SearchBox>
          <SearchInput aria-label="搜索模型树" />
          <SearchTool type="button" aria-label="清除">
            <Svg w={10} h={10}><path d="M1 1l8 8M9 1L1 9" stroke="#999" strokeWidth="1.500" /></Svg>
          </SearchTool>
        </SearchBox>
        <SearchTool type="button" aria-label="搜索选项">
          <Svg w={8} h={5}><path d="M0 0h8L4 4z" fill="#555" /></Svg>
        </SearchTool>
        <SearchTool type="button" aria-label="添加">
          <Svg w={11} h={11}><path d="M4 0h3v4h4v3H7v4H4V7H0V4h4z" fill="#999" /></Svg>
        </SearchTool>
      </SearchRow>
      <Tree>
        <RootRow><RootBar />ZHENLIE2.PRT</RootRow>
        {treeRows.map(([icon, name, o = {}]) => (
          <TreeRow key={name} $muted={o.muted}>
            <Tick $show={o.tick} />
            <Svg>{treeIcons[icon]}</Svg>
            <NodeName $selected={o.selected}>{name}</NodeName>
          </TreeRow>
        ))}
        <InsertMarker />
        <TreeRow>
          <Tick $show />
          <Svg>{treeIcons.pattern}</Svg>
          <NodeName>
            <Svg w={9} h={12}>
              <path d="M4 0v8M0 4h8M1 1l6 6M7 1L1 7" stroke="#444" />
              <path d="M1.500 1.500h5v5h-5z" fill="#ffee00" />
            </Svg>
            阵列 2 / 拉伸 1
          </NodeName>
        </TreeRow>
      </Tree>
      <LayerPanel>
        <SideTools $height={32}>
          <SideTool name="layers" label="层" />
          <Grip $after={20} />
          <SideTool name="expand" label="全部展开" />
          <SideTool name="collapse" label="全部折叠" size={10} width={22} />
          <ToolRule />
          <SideTool name="layerEye" label="显示层" on />
          <SideTool name="layerBox" label="隔离层" on />
          <SideTool name="layerDash" label="选择层" on />
          <Spacer />
          <Tool type="button" aria-label="更多"><Svg w={10} h={16}>{sideIcons.more}</Svg></Tool>
          <SideTool name="layerSheet" label="层设置" />
          <SideTool name="sheet" label="设置" />
        </SideTools>
        <ModelSelectShell>
          <ModelSelect disabled aria-label="活动模型" defaultValue="m">
            <option value="m">ZHENLIE2.PRT</option>
          </ModelSelect>
        </ModelSelectShell>
        <LayerBody>
          <LayerList>
            <RootRow $layer>
              <Svg w={5} h={14}><path d="M0 4l4-3v3L0 7M0 10l4-4M0 13l4-3" stroke="#2b7ca5" /></Svg>
              层
            </RootRow>
            {layerRows.map(([icon, name, o = {}]) => (
              <TreeRow key={name} $layer $muted={o.muted}>
                <Tick $layer $show />
                <Svg>{treeIcons[icon]}</Svg>
                <NodeName>{name}</NodeName>
              </TreeRow>
            ))}
          </LayerList>
          <Scrollbar>
            <ScrollUp type="button" aria-label="向上滚动">
              <Svg w={8} h={5}><path d="M0 4h8L4 0z" fill="#888" /></Svg>
            </ScrollUp>
          </Scrollbar>
        </LayerBody>
      </LayerPanel>
    </Side>
  );
}

const menu = ["模型", "分析", "实时仿真", "注释", "工具", "视图", "柔性建模", "应用程序"];

export default function App() {
  return (
    <Page>
      <GlobalStyle />
      <MenuBar>
        <MenuTab type="button" $kind="file">文件</MenuTab>
        {menu.map((m) => <MenuTab type="button" key={m}>{m}</MenuTab>)}
        <MenuTab type="button" $pad={28}>公用</MenuTab>
        <MenuTab type="button" $kind="active">阵列</MenuTab>
      </MenuBar>
      <Header />
      <Body>
        <Sidebar />
        <Viewport>
          <Model />
          <ViewBar>
            {viewTools.map(([label, on, art]) => (
              <ViewTool type="button" key={label} aria-label={label} $on={on}>
                <Svg w={21} h={21}>{art}</Svg>
              </ViewTool>
            ))}
          </ViewBar>
          <RefPanel>
            <PanelGrip />
            <PanelLabel htmlFor="ref-sketch">草绘</PanelLabel>
            <PanelRow>
              <Collector $width={186} $height={23}>
                <CollectorFill>
                  <RedDot />
                  <CollectorInput id="ref-sketch" readOnly value="选择 1 项" />
                </CollectorFill>
              </Collector>
              <DefineButton type="button">定义...</DefineButton>
            </PanelRow>
          </RefPanel>
          <Watermark>
            <Flame viewBox="0 0 24 44">
              <path d="M7 0C13 12 9 17 14 25C14 15 14 8 8 0C17 8 22 17 21 26C20 34 15 38 11 42L4 38C10 33 14 30 13 23C12 16 8 12 4 9C7 17 11 23 8 30" fill="#ff6633" />
            </Flame>
            <Brand><BrandHot>野火</BrandHot><span>论坛</span></Brand>
            <Site>www.proewildfire.cn</Site>
          </Watermark>
        </Viewport>
      </Body>
      <Annotations viewBox="0 0 1621 911" preserveAspectRatio="xMinYMin meet" fill="none" stroke="#e81c1c" strokeWidth="4" strokeLinecap="round" strokeLinejoin="round">
        {STROKES.map((s, i) => <path key={i} d={smooth(s)} />)}
      </Annotations>
    </Page>
  );
}
